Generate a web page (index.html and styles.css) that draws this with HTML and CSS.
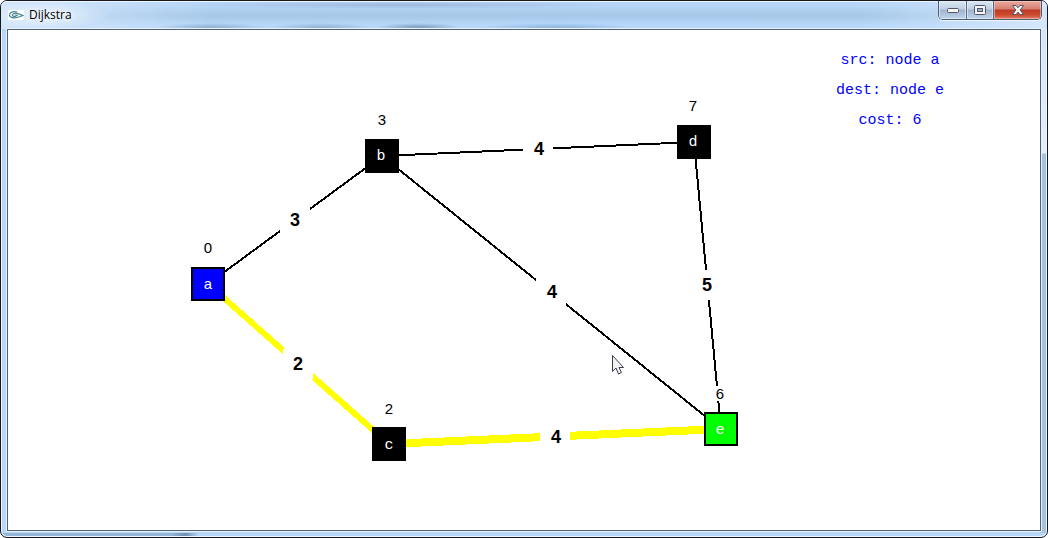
FILE: index.html
```html
<!DOCTYPE html>
<html lang="en">
<head>
<meta charset="utf-8">
<title>Dijkstra</title>
<link rel="stylesheet" href="styles.css">
</head>
<body>
<div class="window">
  <header class="titlebar">
    <svg class="app-icon" width="16" height="10" viewBox="0 0 16 10" aria-hidden="true">
      <rect width="16" height="10" fill="#fff"/>
      <path d="M9 2C5 .8 1.500 2.500 1.500 5S6 8.800 10 7.200L15 5.500L10 3.500C7 2.500 4 4 4.500 5.500S8 7 9.500 5H6.500" fill="none" stroke="#4b8995" stroke-width="1.200"/>
    </svg>
    <h1 class="title">Dijkstra</h1>
    <div class="controls">
      <button class="control minimize" aria-label="Minimize">
        <svg width="14" height="8" viewBox="0 0 14 8"><rect x="1.500" y="2.500" width="11" height="4" rx="1" fill="#f5f5f5" stroke="#535666"/></svg>
      </button>
      <button class="control maximize" aria-label="Maximize">
        <svg width="12" height="10" viewBox="0 0 12 10"><rect x=".5" y=".5" width="11" height="9" rx="1" fill="#f5f5f5" stroke="#535666"/><rect x="3.500" y="3.500" width="5" height="3" fill="#9db5d0" stroke="#535666"/></svg>
      </button>
      <button class="control close" aria-label="Close">
        <svg width="12" height="10" viewBox="0 0 12 10"><path d="M.5.500H4L6 2.800L8 .5H11.500L8.200 5L11.500 9.500H8L6 7.200L4 9.500H.5L3.800 5Z" fill="#f5f5f5" stroke="#535666" stroke-linejoin="round"/></svg>
      </button>
    </div>
  </header>
  <main class="client">
    <svg class="graph" width="820" height="500" viewBox="8 30 820 500" role="img" aria-label="Shortest path graph">
      <g class="edges">
        <path d="M208 284L382 156" stroke-width="2"/>
        <path d="M382 156L694 142" stroke-width="2"/>
        <path d="M382 156L721 429" stroke-width="2"/>
        <path d="M694 142L721 429" stroke-width="2"/>
        <path class="route" d="M208 284L389 444" stroke-width="6"/>
        <path class="route" d="M389 444L721 429" stroke-width="8"/>
      </g>
      <g class="gaps">
        <rect x="280" y="205" width="30" height="30"/>
        <rect x="523" y="134" width="30" height="30"/>
        <rect x="536" y="277" width="30" height="30"/>
        <rect x="692" y="270" width="30" height="30"/>
        <rect x="283" y="349" width="30" height="30"/>
        <rect x="540" y="421" width="30" height="30"/>
        <rect x="713" y="386" width="15" height="15"/>
      </g>
      <g class="weights">
        <text x="295" y="226">3</text>
        <text x="539" y="155">4</text>
        <text x="552" y="298">4</text>
        <text x="707" y="291">5</text>
        <text x="298" y="370">2</text>
        <text x="556" y="443">4</text>
      </g>
      <g class="nodes">
        <rect class="source" x="192" y="268" width="32" height="32"/>
        <rect x="366" y="140" width="32" height="32"/>
        <rect x="373" y="428" width="32" height="32"/>
        <rect x="678" y="126" width="32" height="32"/>
        <rect class="target" x="705" y="413" width="32" height="32"/>
      </g>
      <g class="names">
        <text x="208" y="289">a</text>
        <text x="381" y="160">b</text>
        <text x="389" y="449">c</text>
        <text x="693" y="146">d</text>
        <text x="720" y="434">e</text>
      </g>
      <g class="distances">
        <text x="208" y="253">0</text>
        <text x="382" y="125">3</text>
        <text x="389" y="414">2</text>
        <text x="693" y="111">7</text>
        <text x="720" y="399">6</text>
      </g>
      <path d="M612.500 355.500V371.500L616 368L618.500 374L621.500 372.500L619 367.500H623.500Z" fill="#f3f3f3" stroke="#3b3b50"/>
    </svg>
    <aside class="summary">
      <p>src: node a</p>
      <p>dest: node e</p>
      <p>cost: 6</p>
    </aside>
  </main>
</div>
</body>
</html>
```
FILE: styles.css
```css
* {
  box-sizing: border-box;
}

body {
  margin: 0;
  background: #fff;
}

.window {
  display: flex;
  flex-direction: column;
  min-height: 100vh;
  padding: 0 6px 6px;
  border: 1px solid #17171f;
  border-radius: 7px;
  background:
    linear-gradient(90deg, #94b6d8, #94b6d8 170px, #6f90b0 185px, #b8d8fb 198px) 0 100% / 100% 4px no-repeat,
    linear-gradient(#d3e5f8, #e4eef8 124px, #a4c3df 125px, #a4c3df) 100% 28px / 7px 100% no-repeat,
    #b8d8fb;
  box-shadow: inset 0 0 0 1px #eef6ff;
}

.titlebar {
  display: flex;
  align-items: flex-start;
  height: 28px;
  margin: 0 -6px;
  padding-left: 7px;
  border-radius: 6px 6px 0 0;
  background:
    radial-gradient(ellipse at center, #6f90ad88, #6f90ad00 70%) 155px 22px / 110px 8px no-repeat,
    radial-gradient(ellipse at center, #6f90ad88, #6f90ad00 70%) 270px 22px / 100px 8px no-repeat,
    radial-gradient(ellipse at center, #56789999, #56789900 70%) 375px 22px / 85px 8px no-repeat,
    radial-gradient(ellipse at center, #6f9bc588, #6f9bc500 70%) 475px 22px / 160px 8px no-repeat,
    radial-gradient(ellipse at center, #8fa5cc99, #8fa5cc00 70%) 180px 0 / 440px 8px no-repeat,
    radial-gradient(ellipse at center, #ecf5ffdd, #ecf5ff00 70%) -20px 0 / 130px 28px no-repeat,
    linear-gradient(90deg, #d4e6fa, #d4e6fa00 20%, #d4e6fa00 82%, #d4e6fa),
    linear-gradient(#b6d5f8 5px, #a8cae9 13px, #a8cae9 16px, #b8d8fb 24px);
  box-shadow: inset 0 1px #eef6ff;
}

.app-icon {
  margin: 9px 5px 0 0;
}

.title {
  flex: 1;
  margin: 6px 0 0;
  color: #000;
  font: 400 12px/16px "Open Sans", "Noto Sans", sans-serif;
  text-shadow: 0 0 6px #fff, 0 0 6px #fff;
}

.controls {
  display: flex;
  height: 19px;
  margin-right: 5px;
  border: 1px solid #4c5c72;
  border-top: 0;
  border-radius: 0 0 5px 5px;
  overflow: hidden;
  box-shadow: 0 1px 1px #f2f8ff;
}

.control {
  display: flex;
  align-items: center;
  justify-content: center;
  width: 28px;
  padding: 0;
  border: 0;
  border-right: 1px solid #5d6c80;
  background: linear-gradient(#d9e5f2, #c1d1e4 8px, #9fb4cd 9px, #c1d6ec);
  box-shadow: inset 0 0 0 1px #edf5fd99;
}

.maximize {
  width: 27px;
}

.close {
  width: 47px;
  border-right: 0;
  background: linear-gradient(#e8a99e, #d77f71 8px, #bc3a24 9px, #cf4b30 14px, #df8068);
  box-shadow: inset 0 0 0 1px #ffd8cf88;
}

.client {
  display: flex;
  flex: 1;
  justify-content: space-between;
  border: 1px solid #526273;
  background: #fff;
  box-shadow: 0 0 0 1px #e6f2ff;
}

.graph {
  flex: none;
}

.edges {
  fill: none;
  stroke: #000;
  shape-rendering: crispEdges;
}

.edges .route {
  stroke: #ff0;
}

.gaps {
  fill: #fff;
}

.weights {
  font: 700 18px "Liberation Sans", Arial, sans-serif;
  text-anchor: middle;
}

.nodes {
  fill: #000;
  stroke: #000;
  stroke-width: 2px;
}

.nodes .source {
  fill: #00f;
}

.nodes .target {
  fill: #0f0;
}

.names {
  fill: #fff;
  font: 15px "Liberation Mono", monospace;
  text-anchor: middle;
}

.distances {
  font: 15px "Liberation Sans", Arial, sans-serif;
  text-anchor: middle;
}

.summary {
  flex: none;
  width: 300px;
  margin: 16px 0 0 -88px;
  color: #00f;
  font: 15px/30px "Liberation Mono", monospace;
  text-align: center;
}

.summary p {
  margin: 0;
}
```
